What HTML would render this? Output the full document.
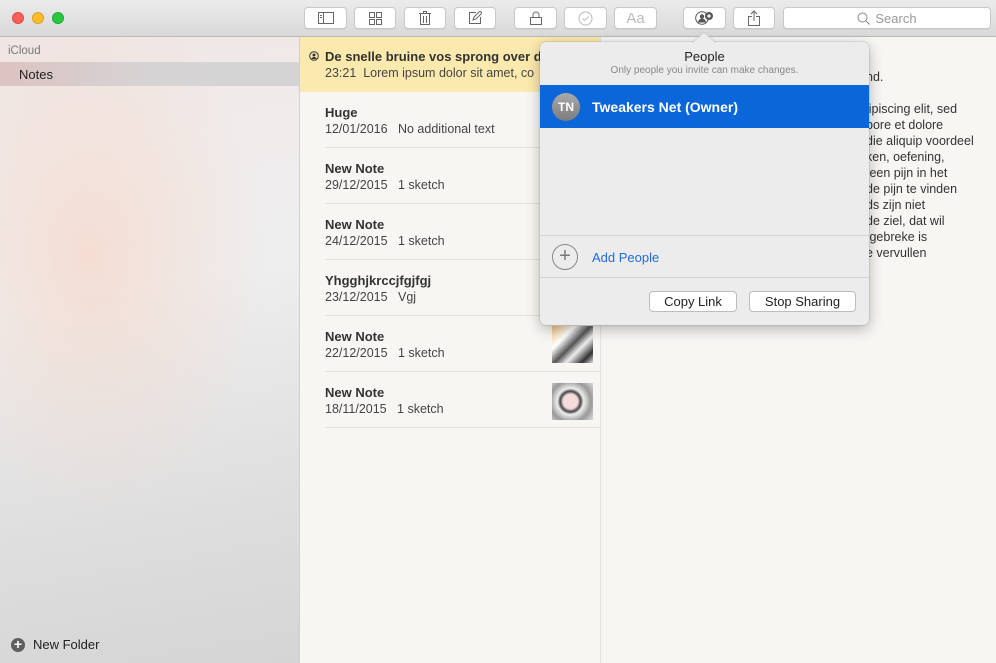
<!DOCTYPE html>
<html><head><meta charset="utf-8"><style>
*{margin:0;padding:0;box-sizing:border-box}
body{width:996px;height:663px;overflow:hidden;font-family:"Liberation Sans",sans-serif;background:#f7f6f3;position:relative;color:#333}
.tb{position:absolute;left:0;top:0;width:996px;height:37px;background:linear-gradient(#ebebeb,#d9d9d9);border-bottom:1px solid #b8b8b8}
.light{position:absolute;top:12px;width:12px;height:12px;border-radius:50%}
.btn{position:absolute;top:7px;height:22px;background:#fff;border:1px solid #c8c8c8;border-radius:4px;box-shadow:0 1px 0 rgba(0,0,0,.05);display:flex;align-items:center;justify-content:center;color:#6a6a6a}
.side{position:absolute;left:0;top:37px;width:300px;height:626px;background:radial-gradient(ellipse 180px 260px at 90px 220px,rgba(246,215,200,.7),rgba(240,230,230,0)),linear-gradient(170deg,#efe6e4 0%,#f0ecec 20%,#eeeeef 40%,#dcdcdc 80%,#d6d5d6 100%);border-right:1px solid #d0d0d0}
.list{position:absolute;left:300px;top:37px;width:301px;height:626px;background:#f7f6f2;border-right:1px solid #e2e2e0}
.row{position:absolute;left:25px;width:275px;height:56px;border-bottom:1px solid #e2e1dd}
.t{position:absolute;left:0;top:13px;font-size:13px;font-weight:bold;color:#333}
.d{position:absolute;left:0;top:30px;font-size:12.5px;color:#444}
.ed{position:absolute;left:866px;top:69px;font-size:12.5px;line-height:16px;color:#333;white-space:pre}
.pop{position:absolute;left:540px;top:42px;width:329px;height:283px;background:#ececec;border-radius:6px;box-shadow:0 4px 14px rgba(0,0,0,.28),0 0 0 1px rgba(0,0,0,.08);z-index:5;overflow:hidden}
.pb{position:absolute;top:249px;height:21px;background:#fff;border:1px solid #bdbdbd;border-radius:4px;font-size:13px;color:#222;display:flex;align-items:center;justify-content:center}
</style></head><body>
<div class="tb">
<div class="light" style="left:12px;background:#fc5f57;border:1px solid #df4a42"></div>
<div class="light" style="left:32px;background:#fdbc2e;border:1px solid #dea123"></div>
<div class="light" style="left:52px;background:#28c840;border:1px solid #1fa92f"></div>
<div class="btn" style="left:304px;width:43px"><svg width="16" height="12"><rect x=".5" y=".5" width="15" height="11" fill="none" stroke="#666"/><line x1="5.5" y1="1" x2="5.5" y2="11" stroke="#666"/><line x1="2" y1="3.5" x2="4" y2="3.5" stroke="#666"/><line x1="2" y1="5.5" x2="4" y2="5.5" stroke="#666"/></svg></div>
<div class="btn" style="left:354px;width:42px"><svg width="13" height="13" fill="none" stroke="#666"><rect x=".5" y=".5" width="5" height="5"/><rect x="7.5" y=".5" width="5" height="5"/><rect x=".5" y="7.5" width="5" height="5"/><rect x="7.5" y="7.5" width="5" height="5"/></svg></div>
<div class="btn" style="left:404px;width:42px"><svg width="12" height="14" fill="none" stroke="#666"><line x1="0" y1="2.5" x2="12" y2="2.5"/><rect x="4.5" y=".5" width="3" height="2"/><path d="M1.5 3v10.5h9V3"/><line x1="4.5" y1="5" x2="4.5" y2="12"/><line x1="7.5" y1="5" x2="7.5" y2="12"/></svg></div>
<div class="btn" style="left:454px;width:42px"><svg width="14" height="14" fill="none" stroke="#666"><path d="M8 1.5H1.5v11h11V6"/><path d="M5 9l1-3 6-6 2 2-6 6z"/></svg></div>
<div class="btn" style="left:514px;width:43px"><svg width="12" height="14" fill="none" stroke="#666"><rect x=".5" y="6.5" width="11" height="7"/><path d="M3 6.5V4a3 3 0 0 1 6 0v2.5"/></svg></div>
<div class="btn" style="left:564px;width:43px"><svg width="15" height="15" fill="none" stroke="#bbb"><circle cx="7.5" cy="7.5" r="6.5"/><path d="M4.5 7.5l2 2 4-4"/></svg></div>
<div class="btn" style="left:614px;width:43px;color:#bbb;font-size:15px">Aa</div>
<div class="btn" style="left:683px;width:43px"><svg width="20" height="14"><circle cx="7" cy="7" r="6.3" fill="none" stroke="#555"/><circle cx="7" cy="5.5" r="2.2" fill="#555"/><path d="M3 11.5a4 4 0 0 1 8 0" fill="#555"/><circle cx="14" cy="5" r="4" fill="#555"/><path d="M14 3v4M12 5h4" stroke="#fff" stroke-width="1.2"/></svg></div>
<div class="btn" style="left:733px;width:42px"><svg width="12" height="16" fill="none" stroke="#666"><path d="M4 6.5H.5v9h11v-9H8"/><path d="M6 11V1M3 4l3-3 3 3"/></svg></div>
<div class="btn" style="left:783px;width:208px;color:#999;font-size:13px"><svg width="13" height="13" fill="none" stroke="#888" style="margin-right:5px"><circle cx="5.5" cy="5.5" r="4.5"/><line x1="9" y1="9" x2="12.5" y2="12.5"/></svg>Search</div>
</div>
<div class="side">
<div style="position:absolute;left:8px;top:8px;font-size:11.5px;color:#7a7a7a">iCloud</div>
<div style="position:absolute;left:0;top:25px;width:299px;height:24px;background:linear-gradient(90deg,#dcc3c2,#d6d3d4 50%,#d4d4d5)"></div>
<div style="position:absolute;left:19px;top:30px;font-size:13px;color:#222">Notes</div>
<div style="position:absolute;left:11px;top:601px;width:14px;height:14px;border-radius:50%;background:#5e5e5e;color:#fff;font-size:14px;line-height:13px;text-align:center;font-weight:bold">+</div>
<div style="position:absolute;left:33px;top:600px;font-size:13px;color:#222">New Folder</div>
</div>
<div class="list">
<div style="position:absolute;left:0;top:0;width:300px;height:55px;background:#fbe9ad"></div>
<svg style="position:absolute;left:9px;top:14px" width="10" height="10"><circle cx="5" cy="5" r="4.3" fill="none" stroke="#333"/><circle cx="5" cy="4" r="1.5" fill="#333"/><path d="M2.5 8a2.5 2 0 0 1 5 0" fill="#333"/></svg>
<div style="position:absolute;left:25px;top:12px;font-size:13px;font-weight:bold;white-space:nowrap">De snelle bruine vos sprong over d</div>
<div style="position:absolute;left:25px;top:29px;font-size:12.5px;color:#444;white-space:nowrap">23:21&nbsp; Lorem ipsum dolor sit amet, co</div>
<div class="row" style="top:55px"><div class="t">Huge</div><div class="d">12/01/2016&nbsp;&nbsp; No additional text</div></div>
<div class="row" style="top:111px"><div class="t">New Note</div><div class="d">29/12/2015&nbsp;&nbsp; 1 sketch</div></div>
<div class="row" style="top:167px"><div class="t">New Note</div><div class="d">24/12/2015&nbsp;&nbsp; 1 sketch</div></div>
<div class="row" style="top:223px"><div class="t">Yhgghjkrccjfgjfgj</div><div class="d">23/12/2015&nbsp;&nbsp; Vgj</div></div>
<div class="row" style="top:279px"><div class="t">New Note</div><div class="d">22/12/2015&nbsp;&nbsp; 1 sketch</div>
<div style="position:absolute;left:227px;top:10px;width:41px;height:37px;background:linear-gradient(135deg,#f1c27a,#fff 30%,#555 50%,#eee 65%,#333 85%,#ddd)"></div></div>
<div class="row" style="top:335px"><div class="t">New Note</div><div class="d">18/11/2015&nbsp;&nbsp; 1 sketch</div>
<div style="position:absolute;left:227px;top:11px;width:41px;height:37px;background:radial-gradient(circle at 45% 50%,#f4dcdc 25%,#444 35%,#eee 45%,#999 70%,#ddd)"></div></div>
</div>
<div class="ed">nd.

lipiscing elit, sed
bore et dolore
die aliquip voordeel
ken, oefening,
 een pijn in het
de pijn te vinden
ds zijn niet
de ziel, dat wil
 gebreke is
e vervullen</div>
<svg style="position:absolute;left:692px;top:32px;z-index:6" width="24" height="11"><path d="M0 11L12 0l12 11z" fill="#ececec"/><path d="M0 11L12 0l12 11" fill="none" stroke="rgba(0,0,0,.1)"/></svg>
<div class="pop">
<div style="position:absolute;left:0;top:7px;width:329px;text-align:center;font-size:13px;color:#222">People</div>
<div style="position:absolute;left:0;top:23px;width:329px;text-align:center;font-size:10px;color:#888">Only people you invite can make changes.</div>
<div style="position:absolute;left:0;top:43px;width:329px;height:43px;background:#0b66d9"></div>
<div style="position:absolute;left:12px;top:51px;width:28px;height:28px;border-radius:50%;background:linear-gradient(#aaa,#7c7c80);color:#fff;font-size:12px;font-weight:bold;text-align:center;line-height:28px">TN</div>
<div style="position:absolute;left:52px;top:57px;font-size:14px;font-weight:bold;color:#fff">Tweakers Net (Owner)</div>
<div style="position:absolute;left:0;top:193px;width:329px;height:1px;background:#d4d4d4"></div>
<div style="position:absolute;left:12px;top:202px;width:26px;height:26px;border-radius:50%;border:1px solid #888;color:#777;font-size:20px;line-height:23px;text-align:center;font-weight:300">+</div>
<div style="position:absolute;left:52px;top:208px;font-size:13px;color:#1a6ee0">Add People</div>
<div style="position:absolute;left:0;top:235px;width:329px;height:1px;background:#d4d4d4"></div>
<div class="pb" style="left:109px;width:88px">Copy Link</div>
<div class="pb" style="left:209px;width:107px">Stop Sharing</div>
</div>
</body></html>
